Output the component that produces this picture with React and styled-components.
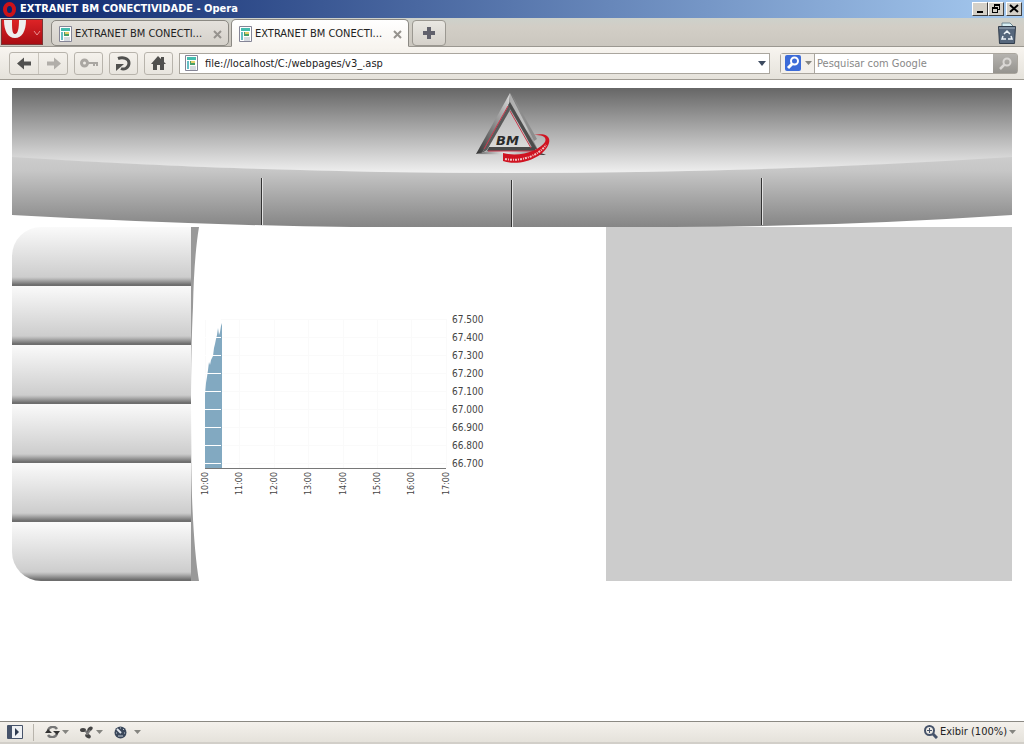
import React from "react";
import styled, { createGlobalStyle } from "styled-components";

const GlobalStyle = createGlobalStyle`
  body {
    margin: 0;
    background: white;
  }
  *, *::before, *::after {
    box-sizing: border-box;
  }
  button, input {
    font: inherit;
    padding: 0;
    margin: 0;
  }
`;

const Window = styled.div`
  display: flex;
  flex-direction: column;
  min-height: 100vh;
  font: 11px/14px "DejaVu Sans Condensed", "Noto Sans", sans-serif;
  color: #222;
`;

const TitleBar = styled.header`
  display: flex;
  align-items: center;
  gap: 4px;
  height: 18px;
  padding: 0 2px 0 3px;
  background: linear-gradient(to right, #0a246a, #a6caf0);
`;

const Title = styled.h1`
  flex: 1;
  margin: 0;
  font-size: 11px;
  line-height: 14px;
  color: white;
`;

const WindowButtons = styled.div`
  display: flex;
`;

const WindowButton = styled.button`
  display: grid;
  place-items: center;
  width: 16px;
  height: 14px;
  margin-left: ${(p) => (p.$apart ? "2px" : "0")};
  border: 1px solid;
  border-color: white #404040 #404040 white;
  background: #d4d0c8;
`;

const TabBar = styled.nav`
  display: flex;
  align-items: flex-end;
  height: 29px;
  padding-right: 8px;
  border-bottom: 1px solid #9b9891;
  background: linear-gradient(#cdd1cb, #d2cec6 30%, #cbc7bf);
`;

const OperaMenu = styled.button`
  align-self: flex-start;
  width: 42px;
  height: 26px;
  margin: 1px 8px 0 1px;
  border: 1px solid #7a3434;
  background: linear-gradient(#dd2326, #a90d13);
`;

const Tab = styled.div`
  display: flex;
  align-items: center;
  gap: 3px;
  width: 178px;
  height: ${(p) => (p.$active ? "28px" : "26px")};
  margin: 0 2px ${(p) => (p.$active ? "-1px" : "0")} 0;
  padding: 2px 6px 0 7px;
  border: 1px solid #8b8983;
  border-bottom-color: ${(p) => (p.$active ? "#f8f5f0" : "#8b8983")};
  border-radius: ${(p) => (p.$active ? "5px 5px 0 0" : "5px")};
  background: ${(p) =>
    p.$active ? "linear-gradient(#fff, #f8f5f0)" : "linear-gradient(#e4e1dc, #d5d1ca)"};
`;

const TabLink = styled.a`
  flex: 1;
  min-width: 0;
  overflow: hidden;
  white-space: nowrap;
  color: inherit;
  text-decoration: none;
`;

const PlainButton = styled.button`
  display: flex;
  align-items: center;
  gap: 2px;
  border: 0;
  background: none;
  color: inherit;
`;

const NewTab = styled.button`
  display: grid;
  place-items: center;
  width: 34px;
  height: 26px;
  margin: 0 auto 0 1px;
  border: 1px solid #9b9891;
  border-radius: 4px;
  background: linear-gradient(#e9e7e2, #d5d1ca);
`;

const ToolBar = styled.div`
  display: flex;
  align-items: center;
  gap: 6px;
  height: 33px;
  padding: 0 6px 0 9px;
  border-bottom: 1px solid #a09c94;
  background: linear-gradient(#f8f5f0, #e5e2db);
`;

const ButtonGroup = styled.div`
  display: flex;
  height: 23px;
  border: 1px solid #b8b4ac;
  border-radius: 3px;
`;

const ToolButton = styled.button`
  display: grid;
  place-items: center;
  width: ${(p) => p.$width || 27}px;
  border: 0;
  border-left: ${(p) => (p.$divided ? "1px solid #c8c4bc" : "0")};
  background: none;
`;

const Field = styled.form`
  display: flex;
  align-items: center;
  flex: ${(p) => (p.$fixed ? "0 0 238px" : "1")};
  height: 21px;
  margin-left: ${(p) => (p.$fixed ? "4px" : "0")};
  border: 1px solid #aaa69e;
  border-radius: ${(p) => (p.$fixed ? "3px" : "0")};
  background: white;
`;

const FieldIcon = styled.span`
  display: flex;
  padding: 0 5px;
`;

const Input = styled.input`
  flex: 1;
  min-width: 0;
  height: 100%;
  padding-left: 2px;
  border: 0;
  outline: 0;
  background: none;
  color: #222;

  &::placeholder {
    color: #888;
    opacity: 1;
  }
`;

const EngineButton = styled(PlainButton)`
  gap: 4px;
  height: 100%;
  padding: 0 2px 0 4px;
  border-right: 1px solid #aaa69e;
  background: #f3f0eb;
`;

const SearchButton = styled.button`
  display: grid;
  place-items: center;
  width: 24px;
  height: 100%;
  border: 0;
  background: linear-gradient(#b5b3af, #96948f);
`;

const Page = styled.main`
  flex: 1;
  padding: 8px 12px;
`;

const Banner = styled.div`
  display: grid;
  height: 139px;

  > * {
    grid-area: 1 / 1;
  }
`;

const BannerShape = styled.svg`
  width: 100%;
  height: 139px;
`;

const LogoLink = styled.a`
  justify-self: center;
  width: 76px;
  height: 74px;
  margin: 4px 0 0 2px;
`;

const Columns = styled.div`
  display: grid;
  grid-template-columns: 187px minmax(300px, 1fr) minmax(0, 1fr);
`;

const Side = styled.nav`
  display: flex;
`;

const SideMenu = styled.div`
  flex: 0 0 179px;
  overflow: hidden;
  border-radius: 29px 0 0 29px;
`;

const SideItem = styled.button`
  display: block;
  width: 100%;
  height: 59px;
  border: 0;
  background: linear-gradient(#fafafa, #cdcdcd 50px, #b8b8b8 52px, #6a6a6a 58px, #707070);
`;

const Content = styled.section`
  padding: 84px 0 0 4px;
`;

const ChartSvg = styled.svg`
  display: block;
  overflow: visible;
  font-family: "DejaVu Sans Condensed", sans-serif;
  font-size: 10px;
  fill: #444;
`;

const HourLabel = styled.text`
  font-family: "DejaVu Sans", sans-serif;
  font-size: 8px;
  text-anchor: end;
`;

const SidePanel = styled.aside`
  background: #ccc;
`;

const StatusBar = styled.footer`
  display: flex;
  align-items: center;
  height: 23px;
  padding: 0 8px 0 7px;
  border-top: 1px solid #8b8983;
  border-bottom: 2px solid #d2cfc9;
  background: linear-gradient(#f4f1ec, #e5e2db);
`;

const StatusGroup = styled.div`
  display: flex;
  align-items: center;
  gap: 11px;
  height: 17px;
  margin: 0 auto 0 10px;
  padding-left: 11px;
  border-left: 1px solid #b8b4ac;
`;

const Caret = ({ color = "#858580" }) => (
  <svg width="7" height="4" viewBox="0 0 7 4">
    <path d="M0 0h7L3.5 4z" fill={color} />
  </svg>
);

const PageIcon = () => (
  <svg width="13" height="16" viewBox="0 0 13 16">
    <path d="M.5.5h12v15H.5z" fill="#fff" stroke="#858596" />
    <path d="M2 2h9v3H2z" fill="#45bcae" />
    <path d="M2 6h2v8H2z" fill="#66bfc5" />
    <path d="M5 6h5v4H5z" fill="#4a9e69" />
    <path d="M6 6h4v2H6z" fill="#e4d06b" />
    <path d="M5 12h6M5 14h6" stroke="#aeb6c1" />
  </svg>
);

const CloseIcon = () => (
  <svg width="9" height="9" viewBox="0 0 9 9">
    <path d="M1 1l7 7M8 1L1 8" stroke="#96938e" strokeWidth="2" />
  </svg>
);

const ArrowIcon = ({ color, flip }) => (
  <svg width="15" height="13" viewBox="0 0 15 13">
    <path
      d="M0 6.5L7 .5v4h7v4H7v4z"
      fill={color}
      transform={flip ? "matrix(-1 0 0 1 15 0)" : undefined}
    />
  </svg>
);

const Magnifier = ({ color }) => (
  <svg width="13" height="13" viewBox="0 0 13 13" fill="none" stroke={color}>
    <circle cx="8" cy="5" r="3.5" strokeWidth="2" />
    <path d="M5.5 7.5L1 12" strokeWidth="2.5" />
  </svg>
);

const Logo = () => (
  <svg width="76" height="74" viewBox="0 0 76 74">
    <defs>
      <linearGradient id="leftSide" x1="0" y1="1" x2="1" y2="0">
        <stop offset="0" stopColor="#333" />
        <stop offset=".4" stopColor="#777" />
        <stop offset="1" stopColor="#ddd" />
      </linearGradient>
      <linearGradient id="rightSide" x1="0" y1="0" x2="1" y2="1">
        <stop offset="0" stopColor="#aaa" />
        <stop offset=".6" stopColor="#c4c4c4" />
        <stop offset="1" stopColor="#777" />
      </linearGradient>
      <linearGradient id="base" x1="0" y1="0" x2="1" y2="0">
        <stop offset="0" stopColor="#666" />
        <stop offset=".4" stopColor="#e2e2e2" />
        <stop offset=".75" stopColor="#aaa" />
        <stop offset="1" stopColor="#222" />
      </linearGradient>
      <linearGradient id="face" x1="0" y1="0" x2="0" y2="1">
        <stop offset="0" stopColor="#b4b4b4" />
        <stop offset="1" stopColor="#dcdcdc" />
      </linearGradient>
    </defs>
    <path d="M33 15L11 57h50z" fill="url(#face)" />
    <path d="M35 1L1 62l6-1L34 13z" fill="url(#leftSide)" />
    <path d="M34 13L7 61l5-3L35 18z" fill="#5a5a5a" />
    <path d="M35 1v14l22 42 6 1z" fill="url(#rightSide)" />
    <path d="M33 13l25 44h4L35 10z" fill="#4c4c4c" />
    <path d="M36 1l26 46-3 2z" fill="#8c8c8c" />
    <path d="M14 55h45l2 4H12z" fill="#494949" />
    <path d="M1 62l12-3h48l10 4z" fill="url(#base)" />
    <path d="M33 14L9 57M35 19l21 37M13 59h46" stroke="#c9374a" fill="none" />
    <text
      x="21"
      y="53"
      fill="#2a2a2a"
      fontFamily="DejaVu Sans, sans-serif"
      fontSize="13"
      fontWeight="bold"
      fontStyle="italic"
    >
      BM
    </text>
    <path
      d="M59 43c9-2 17 0 15 8-4 14-28 24-46 18v-8c17 5 37-3 42-11 2-5-2-7-11-7z"
      fill="#d01321"
    />
    <path
      d="M30 67c16 3 33-3 41-14"
      stroke="#f0c4c4"
      strokeWidth="2"
      strokeDasharray="2 1 1 1"
      fill="none"
    />
  </svg>
);

const prices = ["67.500", "67.400", "67.300", "67.200", "67.100", "67.000", "66.900", "66.800", "66.700"];
const hours = ["10:00", "11:00", "12:00", "13:00", "14:00", "15:00", "16:00", "17:00"];
const hourX = [2, 36, 71, 105, 140, 174, 208, 243];

const Chart = () => (
  <ChartSvg width="290" height="190" viewBox="0 0 290 190">
    {prices.map((p, i) => (
      <path key={p} d={`M2 ${8.5 + i * 18}h241`} stroke="#fafafa" />
    ))}
    {hourX.map((x) => (
      <path key={x} d={`M${x + 0.5} 8v149`} stroke="#fafafa" />
    ))}
    <path d="M2 157V83l1-11 1-6 1-7 1-8 1 3 1-5 2-4 1-8 1-4 1-5 1-4 1-7 1 7 1-3 1-6 1-3v145z" fill="#82a9c1" />
    {prices.map((p, i) => (
      <path key={p} d={`M2 ${8.5 + i * 18}h16`} stroke="#fff" />
    ))}
    <path d="M2 157.5h241" stroke="#777" />
    {prices.map((p, i) => (
      <text key={p} x="249" y={12 + i * 18}>
        {p}
      </text>
    ))}
    {hours.map((h, i) => (
      <HourLabel key={h} transform={`translate(${hourX[i] + 3} 161) rotate(-90)`}>
        {h}
      </HourLabel>
    ))}
  </ChartSvg>
);

const App = () => {
  return (
    <Window>
      <GlobalStyle />
      <TitleBar>
        <svg width="13" height="15" viewBox="0 0 13 15">
          <ellipse cx="6.5" cy="7.5" rx="4.5" ry="5.5" fill="none" stroke="#cc1219" strokeWidth="4" />
        </svg>
        <Title>EXTRANET BM CONECTIVIDADE - Opera</Title>
        <WindowButtons>
          <WindowButton aria-label="Minimizar">
            <svg width="10" height="10" viewBox="0 0 10 10">
              <path d="M2 8h6" stroke="#000" strokeWidth="2" />
            </svg>
          </WindowButton>
          <WindowButton aria-label="Restaurar">
            <svg width="10" height="10" viewBox="0 0 10 10">
              <path
                fillRule="evenodd"
                d="M3 0h6v6H7V5h1V2H4v1H3zM1 3h6v6H1zM2 5v3h4V5z"
              />
            </svg>
          </WindowButton>
          <WindowButton $apart aria-label="Fechar">
            <svg width="10" height="10" viewBox="0 0 10 10">
              <path d="M1 1l8 7M9 1L1 8" stroke="#000" strokeWidth="2" />
            </svg>
          </WindowButton>
        </WindowButtons>
      </TitleBar>

      <TabBar>
        <OperaMenu aria-label="Menu">
          <svg width="40" height="24" viewBox="0 0 40 24">
            <path d="M2 0c0 11 4 18 11 18S24 11 24 0h-7c0 8-1 14-4 14S10 8 10 0z" fill="#eee" />
            <path d="M32 11l3 4 3-4" fill="none" stroke="#e89090" />
          </svg>
        </OperaMenu>
        {[false, true].map((active) => (
          <Tab key={String(active)} $active={active}>
            <PageIcon />
            <TabLink href="#">EXTRANET BM CONECTI...</TabLink>
            <PlainButton aria-label="Fechar aba">
              <CloseIcon />
            </PlainButton>
          </Tab>
        ))}
        <NewTab aria-label="Nova aba">
          <svg width="12" height="12" viewBox="0 0 12 12">
            <path d="M4 0h4v4h4v4H8v4H4V8H0V4h4z" fill="#61616c" />
          </svg>
        </NewTab>
        <PlainButton aria-label="Lixeira">
          <svg width="18" height="24" viewBox="0 0 18 24">
            <path d="M4 5V1h8l3 3v2z" fill="#d8eff5" stroke="#6e8792" />
            <path d="M.5 4.5h17l-1 17h-15z" fill="#56677c" stroke="#303c4b" />
            <path d="M1 6h16" stroke="#a5b4c1" />
            <path
              d="M6 12l3-3 3 3M13 14l1 3h-4M8 17H4l1-3"
              fill="none"
              stroke="#eef4f8"
              strokeWidth="1.5"
            />
          </svg>
        </PlainButton>
      </TabBar>

      <ToolBar>
        <ButtonGroup>
          <ToolButton $width={28} aria-label="Voltar">
            <ArrowIcon color="#51514f" />
          </ToolButton>
          <ToolButton $width={29} $divided aria-label="Avançar">
            <ArrowIcon color="#b1aea9" flip />
          </ToolButton>
        </ButtonGroup>
        <ButtonGroup>
          <ToolButton aria-label="Senhas">
            <svg width="18" height="10" viewBox="0 0 18 10">
              <circle cx="4.5" cy="5" r="3" fill="none" stroke="#aaa7a2" strokeWidth="3" />
              <path d="M8 4h10v4h-2V6h-1v2h-2V6H8z" fill="#aaa7a2" />
            </svg>
          </ToolButton>
        </ButtonGroup>
        <ButtonGroup>
          <ToolButton aria-label="Recarregar">
            <svg width="17" height="15" viewBox="0 0 17 15">
              <path d="M3 2.5c5-2 11 0 11 4.500 0 5-5 7-8 5.500" fill="none" stroke="#50504e" strokeWidth="3" />
              <path d="M1 8h8l-8 7z" fill="#50504e" />
            </svg>
          </ToolButton>
        </ButtonGroup>
        <ButtonGroup>
          <ToolButton aria-label="Início">
            <svg width="15" height="14" viewBox="0 0 15 14">
              <path d="M0 8l7-8 3 3V1h3v5l2 2h-2v6H9V9H6v5H2V8z" fill="#50504e" />
            </svg>
          </ToolButton>
        </ButtonGroup>
        <Field>
          <FieldIcon>
            <PageIcon />
          </FieldIcon>
          <Input aria-label="Endereço" defaultValue="file://localhost/C:/webpages/v3_.asp" />
          <ToolButton $width={14} type="button" aria-label="Histórico">
            <svg width="8" height="5" viewBox="0 0 8 5">
              <path d="M0 0h8L4 5z" fill="#3d4b60" />
            </svg>
          </ToolButton>
        </Field>
        <Field $fixed>
          <EngineButton type="button" aria-label="Google">
            <svg width="16" height="16" viewBox="0 0 16 16">
              <rect width="16" height="16" rx="2" fill="#3c6bd8" />
              <circle cx="9.5" cy="6" r="3.5" fill="none" stroke="#fff" strokeWidth="2" />
              <path d="M7 9l-4 4" stroke="#fff" strokeWidth="3" />
            </svg>
            <Caret />
          </EngineButton>
          <Input aria-label="Pesquisar" placeholder="Pesquisar com Google" />
          <SearchButton type="button" aria-label="Pesquisar">
            <Magnifier color="#d9d7d4" />
          </SearchButton>
        </Field>
      </ToolBar>

      <Page>
        <Banner>
          <BannerShape viewBox="0 0 1000 139" preserveAspectRatio="none">
            <defs>
              <linearGradient id="top" x1="0" y1="0" x2="0" y2="1">
                <stop offset="0" stopColor="#666" />
                <stop offset="1" stopColor="#f0f0f0" />
              </linearGradient>
              <linearGradient id="strip" gradientUnits="userSpaceOnUse" x1="0" y1="69" x2="0" y2="139">
                <stop offset="0" stopColor="#ccc" />
                <stop offset=".2" stopColor="#c6c6c6" />
                <stop offset="1" stopColor="#858585" />
              </linearGradient>
            </defs>
            <path d="M0 0h1000v70Q750 85 500 85Q250 85 0 70z" fill="url(#top)" />
            <path d="M0 69Q250 85 500 85Q750 85 1000 69V127Q820 139 660 139H340Q180 137 0 127z" fill="url(#strip)" />
            <path d="M249.5 90v47M499.5 92v47M749.5 90v47" stroke="#333" />
            <path d="M250.5 90v47M500.5 92v47M750.5 90v47" stroke="#e3e3e3" />
          </BannerShape>
          <LogoLink href="#" aria-label="BM">
            <Logo />
          </LogoLink>
        </Banner>
        <Columns>
          <Side>
            <SideMenu>
              {[1, 2, 3, 4, 5, 6].map((n) => (
                <SideItem key={n} aria-label={`Menu ${n}`} />
              ))}
            </SideMenu>
            <svg width="8" height="354" viewBox="0 0 8 354">
              <path d="M0 0h8Q3 30 2 80Q0 120 0 177Q0 236 1 270Q3 324 8 354H0z" fill="#999" />
            </svg>
          </Side>
          <Content>
            <Chart />
          </Content>
          <SidePanel />
        </Columns>
      </Page>

      <StatusBar>
        <PlainButton aria-label="Painéis">
          <svg width="16" height="14" viewBox="0 0 16 14">
            <path d="M.5.5h15v13H.5z" fill="#eef0f3" stroke="#46536a" />
            <path d="M1 1h4v12H1z" fill="#46536a" />
            <path d="M8 3l4 4-4 4z" fill="#2d3a50" />
          </svg>
        </PlainButton>
        <StatusGroup>
          <PlainButton aria-label="Sincronizar">
            <svg width="15" height="12" viewBox="0 0 15 12">
              <path d="M3 4c2-4 7-4 9-1M12 8c-2 4-7 4-9 1" fill="none" stroke="#777" strokeWidth="2.5" />
              <path d="M8 5h7l-3 4zM0 7l3-4 4 4z" fill="#333" />
            </svg>
            <Caret />
          </PlainButton>
          <PlainButton aria-label="Unite">
            <svg width="14" height="13" viewBox="0 0 14 13" fill="#454545">
              <ellipse cx="3" cy="4" rx="3" ry="2" />
              <ellipse cx="10" cy="3" rx="3" ry="2" transform="rotate(-40 10 3)" />
              <ellipse cx="8" cy="10" rx="3" ry="2" transform="rotate(30 8 10)" />
              <path d="M5 5l3 2 2-3M7 6v3" stroke="#777" strokeWidth="2" />
            </svg>
            <Caret />
          </PlainButton>
          <PlainButton aria-label="Turbo">
            <svg width="18" height="13" viewBox="0 0 18 13">
              <circle cx="6.500" cy="6.500" r="6" fill="#3b485b" />
              <path d="M3 3l4 4" stroke="#e2e7ee" strokeWidth="2" />
              <path d="M2 7h1M6 2h1M9 4l1-1M10 7h1M4 10h5" stroke="#c2cad5" />
            </svg>
            <Caret />
          </PlainButton>
        </StatusGroup>
        <PlainButton>
          <svg width="14" height="14" viewBox="0 0 14 14" fill="none" stroke="#46536a">
            <circle cx="5.5" cy="5.5" r="4.5" strokeWidth="2" />
            <path d="M3 5.5h5M5.5 3v5" />
            <path d="M9 9l4 4" strokeWidth="3" />
          </svg>
          Exibir (100%)
          <Caret />
        </PlainButton>
      </StatusBar>
    </Window>
  );
};

export default App;
